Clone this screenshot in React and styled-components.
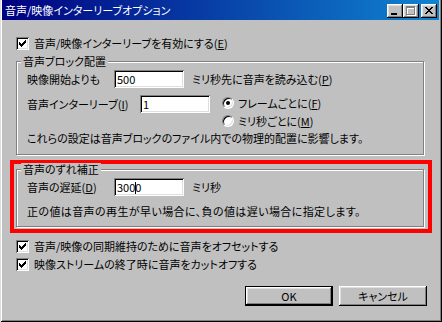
import React from "react";
import styled, { createGlobalStyle } from "styled-components";

const GlobalStyle = createGlobalStyle`
  html, body {
    margin: 0;
    padding: 0;
    background: #c0c0c0;
  }
  body {
    font-family: "Noto Sans CJK JP", "Noto Sans", sans-serif;
    font-size: 11px;
    color: #000;
  }
`;

const Window = styled.div`
  width: 442px;
  height: 322px;
  box-sizing: border-box;
  background: #c0c0c0;
  padding: 0 3px 2px 2px;
  display: flex;
  flex-direction: column;
  font-feature-settings: "palt";
  box-shadow: inset 1px 0 #dfdfdf, inset -1px -1px #000, inset 2px 0 #fff,
    inset -2px -2px #808080;
`;

const TitleBar = styled.div`
  height: 20px;
  display: flex;
  align-items: center;
  padding: 0 2px 0 3px;
  background: linear-gradient(90deg, #000080, #1084d0);
  color: #fff;
`;

const TitleText = styled.div`
  flex: 1;
  line-height: 12px;
  white-space: nowrap;
`;

const TitleControls = styled.div`
  display: flex;
  margin-top: 2px;
`;

const TitleButton = styled.div`
  width: 16px;
  height: 14px;
  margin-left: ${(p) => (p.$gap ? "2px" : "0")};
  background: #c0c0c0;
  box-shadow: inset -1px -1px #000, inset 1px 1px #fff, inset -2px -2px #808080,
    inset 2px 2px #dfdfdf;
  svg {
    display: block;
  }
`;

const Body = styled.div`
  display: flex;
  flex-direction: column;
  padding: 0 15px 0 14px;
`;

const CheckRow = styled.div`
  display: flex;
  align-items: center;
  height: 18px;
  line-height: 18px;
  margin-top: ${(p) => p.$top || 0}px;
  white-space: nowrap;
`;

const CheckBox = styled.span`
  width: 13px;
  height: 13px;
  box-sizing: border-box;
  flex: none;
  display: flex;
  align-items: center;
  justify-content: center;
  margin-right: 5px;
  background: #fff;
  box-shadow: inset 1px 1px #808080, inset -1px -1px #fff, inset 2px 2px #000,
    inset -2px -2px #dfdfdf;
`;

const Group = styled.fieldset`
  margin: ${(p) => p.$margin};
  padding: 0 10px ${(p) => p.$bottom}px;
  min-width: 0;
  border: 1px solid #808080;
  box-shadow: inset 1px 1px #fff, 1px 1px #fff;
`;

const Legend = styled.legend`
  margin-left: -6px;
  padding: 0 2px;
  line-height: 12px;
  background: #c0c0c0;
  white-space: nowrap;
`;

const FieldRow = styled.div`
  display: flex;
  align-items: ${(p) => (p.$top ? "flex-start" : "center")};
  margin-top: ${(p) => p.$mt}px;
  white-space: nowrap;
`;

const Label = styled.span`
  width: ${(p) => p.$w}px;
  flex: none;
  line-height: 18px;
`;

const Edit = styled.div`
  position: relative;
  width: 70px;
  height: 18px;
  box-sizing: border-box;
  flex: none;
  padding-left: 3px;
  line-height: 18px;
  background: #fff;
  box-shadow: inset 1px 1px #808080, inset -1px -1px #fff, inset 2px 2px #000,
    inset -2px -2px #dfdfdf;
`;

const Caret = styled.span`
  display: inline-block;
  width: 1px;
  height: 12px;
  margin-right: -1px;
  vertical-align: -2px;
  background: #000;
`;

const After = styled.span`
  margin-left: 8px;
  line-height: 18px;
`;

const RadioCol = styled.div`
  display: flex;
  flex-direction: column;
  gap: 2px;
  margin-left: 12px;
`;

const RadioRow = styled.div`
  display: flex;
  align-items: center;
  height: 16px;
`;

const Radio = styled.span`
  width: 12px;
  height: 12px;
  box-sizing: border-box;
  flex: none;
  display: flex;
  align-items: center;
  justify-content: center;
  margin-right: 4px;
  border-radius: 50%;
  border: 1px solid;
  border-color: #808080 #fff #fff #808080;
  background: #fff;
  box-shadow: inset 1px 1px #000, inset -1px -1px #dfdfdf;
  &::after {
    content: "";
    width: 4px;
    height: 4px;
    border-radius: 50%;
    background: ${(p) => (p.$on ? "#000" : "transparent")};
  }
`;

const Note = styled.div`
  margin-top: ${(p) => p.$mt}px;
  line-height: 14px;
  letter-spacing: ${(p) => p.$ls || 0}px;
  white-space: nowrap;
`;

const Key = styled.span`
  text-decoration: underline;
`;

const RedFrame = styled.div`
  margin: 5px -8px 0 -6px;
  padding: 0 4px 2px 2px;
  border: 4px solid #ff0000;
`;

const ButtonRow = styled.div`
  display: flex;
  justify-content: flex-end;
  gap: 6px;
  margin: 13px -3px 0 0;
`;

const Button = styled.div`
  width: 88px;
  height: 20px;
  box-sizing: border-box;
  display: flex;
  align-items: center;
  justify-content: center;
  background: #c0c0c0;
  border: ${(p) => (p.$default ? "1px solid #000" : "none")};
  box-shadow: inset -1px -1px #000, inset 1px 1px #fff, inset -2px -2px #808080,
    inset 2px 2px #dfdfdf;
`;

const CheckMark = () => (
  <svg width="7" height="7" viewBox="0 0 7 7" shapeRendering="crispEdges">
    <path
      fill="#000"
      d="M6 0h1v1H6z M5 1h2v1H5z M0 2h1v1H0z M4 2h3v1H4z M0 3h2v1H0z M3 3h3v1H3z M0 4h5v1H0z M1 5h3v1H1z M2 6h1v1H2z"
    />
  </svg>
);

const MinGlyph = () => (
  <svg width="16" height="14" shapeRendering="crispEdges">
    <rect x="4" y="9" width="6" height="2" fill="#000" />
  </svg>
);

const maxPath = (x, y) =>
  `M${x} ${y}h9v2h-9z M${x} ${y + 2}h1v7h-1z M${x + 8} ${y + 2}h1v7h-1z M${x} ${y + 8}h9v1h-9z`;

const MaxGlyph = () => (
  <svg width="16" height="14" shapeRendering="crispEdges">
    <path fill="#fff" d={maxPath(4, 3)} />
    <path fill="#808080" d={maxPath(3, 2)} />
  </svg>
);

const CloseGlyph = () => (
  <svg width="16" height="14" shapeRendering="crispEdges">
    <path
      fill="#000"
      transform="translate(4 3)"
      d="M0 0h2v1H0z M6 0h2v1H6z M1 1h2v1H1z M5 1h2v1H5z M2 2h4v1H2z M3 3h2v1H3z M2 4h4v1H2z M1 5h2v1H1z M5 5h2v1H5z M0 6h2v1H0z M6 6h2v1H6z"
    />
  </svg>
);

export default function App() {
  return (
    <>
      <GlobalStyle />
      <Window>
        <TitleBar>
          <TitleText>音声/映像インターリーブオプション</TitleText>
          <TitleControls>
            <TitleButton>
              <MinGlyph />
            </TitleButton>
            <TitleButton>
              <MaxGlyph />
            </TitleButton>
            <TitleButton $gap>
              <CloseGlyph />
            </TitleButton>
          </TitleControls>
        </TitleBar>

        <Body>
          <CheckRow $top={14}>
            <CheckBox>
              <CheckMark />
            </CheckBox>
            音声/映像インターリーブを有効にする(<Key>E</Key>)
          </CheckRow>

          <Group $margin="3px 0 0" $bottom={9}>
            <Legend>音声ブロック配置</Legend>
            <FieldRow $mt={3}>
              <Label $w={87}>映像開始よりも</Label>
              <Edit>500</Edit>
              <After>
                ミリ秒先に音声を読み込む(<Key>P</Key>)
              </After>
            </FieldRow>
            <FieldRow $mt={7} $top>
              <Label $w={113}>
                音声インターリーブ(<Key>I</Key>)
              </Label>
              <Edit>1</Edit>
              <RadioCol>
                <RadioRow>
                  <Radio $on />
                  フレームごとに(<Key>F</Key>)
                </RadioRow>
                <RadioRow>
                  <Radio />
                  ミリ秒ごとに(<Key>M</Key>)
                </RadioRow>
              </RadioCol>
            </FieldRow>
            <Note $mt={2}>
              これらの設定は音声ブロックのファイル内での物理的配置に影響します。
            </Note>
          </Group>

          <RedFrame>
            <Group $margin="-1px 0 0" $bottom={8}>
              <Legend>音声のずれ補正</Legend>
              <FieldRow $mt={3}>
                <Label $w={87}>
                  音声の遅延(<Key>D</Key>)
                </Label>
                <Edit>
                  300
                  <Caret />0
                </Edit>
                <After>ミリ秒</After>
              </FieldRow>
              <Note $mt={8} $ls={0.4}>
                正の値は音声の再生が早い場合に、負の値は遅い場合に指定します。
              </Note>
            </Group>
          </RedFrame>

          <CheckRow $top={4}>
            <CheckBox>
              <CheckMark />
            </CheckBox>
            音声/映像の同期維持のために音声をオフセットする
          </CheckRow>
          <CheckRow>
            <CheckBox>
              <CheckMark />
            </CheckBox>
            映像ストリームの終了時に音声をカットオフする
          </CheckRow>

          <ButtonRow>
            <Button $default>OK</Button>
            <Button>キャンセル</Button>
          </ButtonRow>
        </Body>
      </Window>
    </>
  );
}
